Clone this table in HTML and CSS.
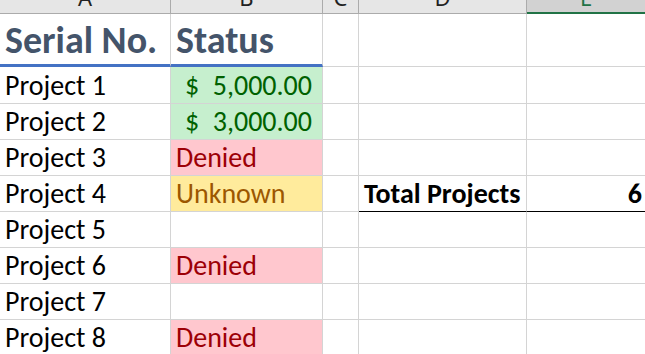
FILE: index.html
```html
<!DOCTYPE html>
<html lang="en">
<head>
<meta charset="utf-8">
<title>Projects</title>
<link rel="stylesheet" href="styles.css">
</head>
<body>
<div class="sheet">
  <div class="ch"><span>A</span></div>
  <div class="ch"><span>B</span></div>
  <div class="ch"><span>C</span></div>
  <div class="ch"><span>D</span></div>
  <div class="ch ch-sel"><span>E</span></div>

  <div class="c head">Serial No.</div>
  <div class="c head">Status</div>
  <div class="c r1"></div>
  <div class="c r1"></div>
  <div class="c r1 last"></div>

  <div class="c">Project 1</div>
  <div class="c good acct"><span>$</span><span>5,000.00</span></div>
  <div class="c"></div>
  <div class="c"></div>
  <div class="c last"></div>

  <div class="c">Project 2</div>
  <div class="c good acct"><span>$</span><span>3,000.00</span></div>
  <div class="c"></div>
  <div class="c"></div>
  <div class="c last"></div>

  <div class="c">Project 3</div>
  <div class="c bad">Denied</div>
  <div class="c"></div>
  <div class="c"></div>
  <div class="c last"></div>

  <div class="c">Project 4</div>
  <div class="c neutral">Unknown</div>
  <div class="c"></div>
  <div class="c total">Total Projects</div>
  <div class="c total num last">6</div>

  <div class="c">Project 5</div>
  <div class="c"></div>
  <div class="c"></div>
  <div class="c"></div>
  <div class="c last"></div>

  <div class="c">Project 6</div>
  <div class="c bad">Denied</div>
  <div class="c"></div>
  <div class="c"></div>
  <div class="c last"></div>

  <div class="c">Project 7</div>
  <div class="c"></div>
  <div class="c"></div>
  <div class="c"></div>
  <div class="c last"></div>

  <div class="c">Project 8</div>
  <div class="c bad">Denied</div>
  <div class="c"></div>
  <div class="c"></div>
  <div class="c last"></div>
</div>
</body>
</html>
```

FILE: styles.css
```css
html, body {
  margin: 0;
  padding: 0;
  background: #ffffff;
  overflow: hidden;
}

.sheet {
  width: 645px;
  height: 354px;
  overflow: hidden;
  display: grid;
  grid-template-columns: 171px 152px 36px 168px 118px;
  grid-template-rows: 14px 53px 37px repeat(7, 36px);
  font-family: Carlito, Calibri, Lato, "Open Sans", sans-serif;
  color: #000000;
}

.ch {
  box-sizing: border-box;
  background: #e6e6e6;
  border-right: 1px solid #ababab;
  border-bottom: 1px solid #ababab;
  overflow: hidden;
  display: flex;
  justify-content: center;
  align-items: flex-start;
}

.ch span {
  font-family: "Noto Sans", "DejaVu Sans", sans-serif;
  font-size: 22px;
  line-height: 22px;
  margin-top: -14px;
  color: #222222;
}

.ch-sel {
  background: #d2d2d2;
  border-bottom: 2px solid #217346;
  border-right: none;
}

.ch-sel span {
  color: #217346;
}

.c {
  box-sizing: border-box;
  border-right: 1px solid #d4d4d4;
  border-bottom: 1px solid #d4d4d4;
  display: flex;
  align-items: flex-end;
  padding: 0 5px 3px 5px;
  font-size: 28px;
  line-height: 28px;
  white-space: nowrap;
  overflow: hidden;
}

.last {
  border-right: none;
}

.head {
  font-size: 38px;
  line-height: 38px;
  font-weight: bold;
  color: #44546a;
  border-bottom: 3px solid #4472c4;
  padding-bottom: 5px;
}

.r1 {
  border-bottom-width: 1px;
}

.good {
  background: #c6efce;
  color: #006100;
}

.acct {
  justify-content: space-between;
  padding-left: 14px;
  padding-right: 10px;
}

.bad {
  background: #ffc7ce;
  color: #9c0006;
}

.neutral {
  background: #ffeb9c;
  color: #9c5700;
}

.total {
  font-weight: bold;
  border-bottom: 1px solid #000000;
}

.num {
  justify-content: flex-end;
  padding-right: 3px;
}
```
